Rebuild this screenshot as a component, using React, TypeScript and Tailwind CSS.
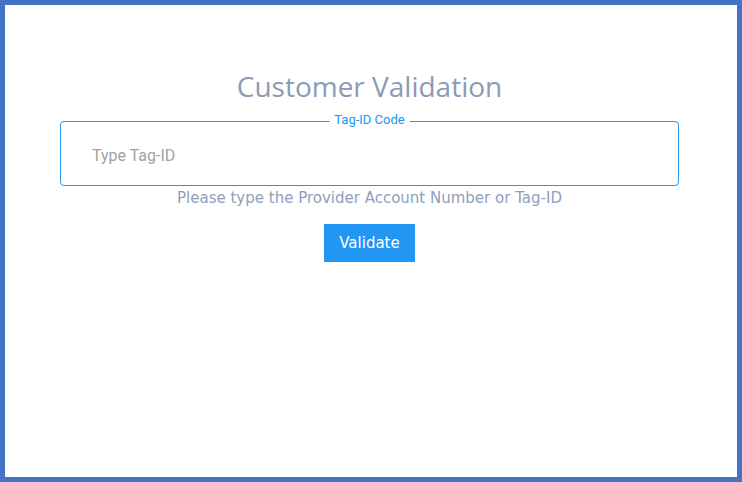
export default function App() {
  return (
    <div className="h-[482px] w-full border-[5px] border-[#4472c4] bg-white">
      <div className="flex flex-col items-center pr-[3px] pt-[61px]">
        <h1 className="font-['Open_Sans',sans-serif] text-[28px] leading-[40px] font-normal text-[#8a9bb8]">
          Customer Validation
        </h1>

        <div className="relative mt-[15px] h-[65px] w-[619px] rounded-[4px] border border-[#2196f3]">
          <span className="absolute left-1/2 top-[-10px] -translate-x-1/2 bg-white px-[5px] font-['Roboto',sans-serif] text-[13px] leading-[16px] text-[#2196f3]">
            Tag-ID Code
          </span>
          <input
            type="text"
            placeholder="Type Tag-ID"
            className="h-full w-full bg-transparent pl-[31px] pt-[3px] font-['Roboto',sans-serif] text-[16px] text-gray-700 outline-none placeholder:text-[#a3a3a3]"
          />
        </div>

        <p className="mt-[1px] font-['DejaVu_Sans',sans-serif] text-[15px] leading-[22px] text-[#8fa0bb]">
          Please type the Provider Account Number or Tag-ID
        </p>

        <button
          type="button"
          className="mt-[15px] h-[38px] w-[91px] bg-[#2196f3] font-['DejaVu_Sans',sans-serif] text-[15px] text-white"
        >
          Validate
        </button>
      </div>
    </div>
  );
}
